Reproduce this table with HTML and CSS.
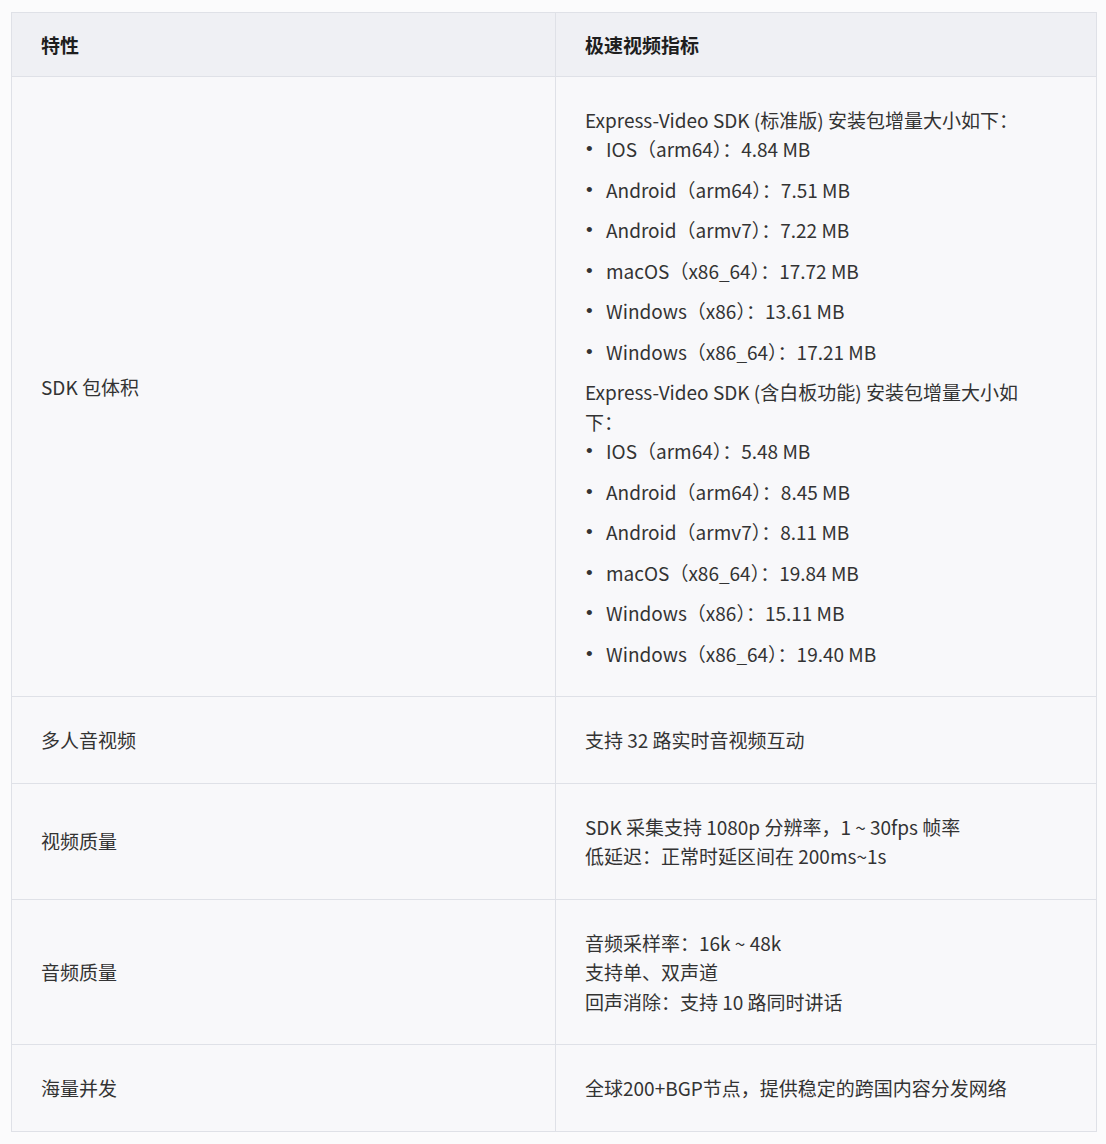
FILE: index.html
```html
<!DOCTYPE html>
<html lang="zh-CN">
<head>
  <meta charset="UTF-8">
  <meta name="viewport" content="width=device-width, initial-scale=1.0">
  <title>极速视频指标</title>
  <link rel="stylesheet" href="styles.css">
</head>
<body>
  <table class="spec-table">
    <colgroup>
      <col class="col-feature">
      <col class="col-value">
    </colgroup>
    <thead>
      <tr>
        <th>特性</th>
        <th>极速视频指标</th>
      </tr>
    </thead>
    <tbody>
      <tr>
        <td>SDK 包体积</td>
        <td>
          <p>Express-Video SDK (标准版) 安装包增量大小如下：</p>
          <ul>
            <li>IOS（arm64）：4.84 MB</li>
            <li>Android（arm64）：7.51 MB</li>
            <li>Android（armv7）：7.22 MB</li>
            <li>macOS（x86_64）：17.72 MB</li>
            <li>Windows（x86）：13.61 MB</li>
            <li>Windows（x86_64）：17.21 MB</li>
          </ul>
          <p>Express-Video SDK (含白板功能) 安装包增量大小如下：</p>
          <ul>
            <li>IOS（arm64）：5.48 MB</li>
            <li>Android（arm64）：8.45 MB</li>
            <li>Android（armv7）：8.11 MB</li>
            <li>macOS（x86_64）：19.84 MB</li>
            <li>Windows（x86）：15.11 MB</li>
            <li>Windows（x86_64）：19.40 MB</li>
          </ul>
        </td>
      </tr>
      <tr>
        <td>多人音视频</td>
        <td>支持 32 路实时音视频互动</td>
      </tr>
      <tr>
        <td>视频质量</td>
        <td>SDK 采集支持 1080p 分辨率，1 ~ 30fps 帧率<br>低延迟：正常时延区间在 200ms~1s</td>
      </tr>
      <tr>
        <td>音频质量</td>
        <td>音频采样率：16k ~ 48k<br>支持单、双声道<br>回声消除：支持 10 路同时讲话</td>
      </tr>
      <tr>
        <td>海量并发</td>
        <td>全球200+BGP节点，提供稳定的跨国内容分发网络</td>
      </tr>
    </tbody>
  </table>
</body>
</html>
```

FILE: styles.css
```css
body {
  margin: 12px 9px 12px 11px;
  background-color: #fbfbfc;
  font-family: "Noto Sans CJK SC", "Liberation Sans", sans-serif;
  font-size: 19px;
  line-height: 29.5px;
  color: #333;
}

.spec-table {
  width: 1085px;
  border-collapse: collapse;
  border: 1px solid #dfe1e7;
  table-layout: fixed;
}

.col-feature {
  width: 544px;
}

.col-value {
  width: 541px;
}

.spec-table th,
.spec-table td {
  border: 1px solid #dfe1e7;
  text-align: left;
  vertical-align: middle;
  padding: 28px 62px 28px 29px;
}

.spec-table th {
  background-color: #eff0f4;
  color: #1e1e1e;
  font-weight: bold;
  padding-top: 16.5px;
  padding-bottom: 16.5px;
}

.spec-table td {
  background-color: #f8f8fa;
}

.spec-table p {
  margin: 0;
}

.spec-table ul {
  margin: 0;
  padding: 0;
  list-style: none;
}

.spec-table li {
  margin-bottom: 11px;
  padding-left: 21px;
  position: relative;
}

.spec-table li::before {
  content: "\2022";
  font-family: "Liberation Sans", sans-serif;
  position: absolute;
  left: 1px;
  top: 0;
}

.spec-table ul:last-child li:last-child {
  margin-bottom: 0;
}
```
